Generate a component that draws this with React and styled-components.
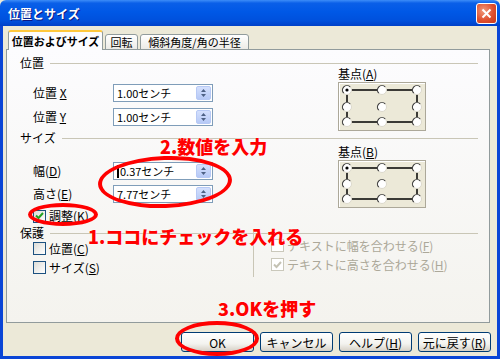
import React from 'react'
import styled, { createGlobalStyle } from 'styled-components'

const GlobalStyle = createGlobalStyle`
  html, body { margin:0; padding:0; background:#ECE9D8; }
  body {
    font-family:"Noto Sans CJK JP", "Liberation Sans", sans-serif;
    font-size:12px;
    color:#000;
  }
`

const Window = styled.div`
  position:relative;
  width:500px;
  height:359px;
  display:flex;
  flex-direction:column;
  overflow:hidden;
`

const TitleBar = styled.div`
  height:26px;
  flex:none;
  display:flex;
  align-items:center;
  justify-content:space-between;
  padding:0 3px 0 8px;
  background:linear-gradient(#3D8DF8 0%, #0A5FE8 12%, #0058E6 45%, #0050DC 80%, #0040C8 100%);
  border-radius:6px 6px 0 0;
`

const Title = styled.span`
  color:#fff;
  font-weight:700;
  font-size:12px;
  text-shadow:1px 1px 0 #0A1883;
`

const CloseBtn = styled.div`
  width:21px;
  height:21px;
  box-sizing:border-box;
  border:1px solid #fff;
  border-radius:3px;
  background:radial-gradient(circle at 35% 35%, #F09A7C 0%, #E0502F 55%, #C8381A 100%);
  display:flex;
  align-items:center;
  justify-content:center;
`

const Body = styled.div`
  flex:1;
  display:flex;
  flex-direction:column;
  background:#ECE9D8;
  border:3px solid #0A45D6;
  border-top:none;
  padding:5px 7px 0 3px;
`

const Tabs = styled.div`
  display:flex;
  align-items:flex-end;
  gap:2px;
  height:19px;
  margin-left:2px;
  margin-bottom:-1px;
  position:relative;
  z-index:1;
`

const Tab = styled.div`
  box-sizing:border-box;
  width:${p => p.$w}px;
  height:${p => (p.$active ? '20px' : '16px')};
  display:flex;
  align-items:center;
  justify-content:center;
  border:1px solid #919B9C;
  border-bottom:${p => (p.$active ? 'none' : '1px solid #919B9C')};
  border-top:${p => (p.$active ? '2px solid #FFC83C' : '1px solid #919B9C')};
  border-radius:3px 3px 0 0;
  background:${p => (p.$active ? '#FCFCFE' : 'linear-gradient(#FFFFFF, #ECEBE6)')};
  font-weight:${p => (p.$active ? 700 : 400)};
  font-size:11px;
  white-space:nowrap;
`

const Panel = styled.div`
  height:274px;
  box-sizing:border-box;
  border:1px solid #919B9C;
  background:linear-gradient(#FCFCFE, #F4F3EE);
  padding:8px 11px 0 13px;
`

const SectionHead = styled.div`
  display:flex;
  align-items:center;
  gap:6px;
  height:10px;
  line-height:10px;
  margin-top:${p => p.$gap || 0}px;
  &::after {
    content:'';
    flex:1;
    border-top:1px solid #C9C6B6;
  }
`

const SplitBody = styled.div`
  display:grid;
  grid-template-columns:318px 1fr;
`

const FieldCol = styled.div`
  display:flex;
  flex-direction:column;
  padding-top:${p => p.$top}px;
  gap:${p => p.$gap}px;
`

const BasisCol = styled.div`
  display:flex;
  flex-direction:column;
  align-items:flex-start;
  gap:2px;
  line-height:12px;
  padding-top:${p => p.$top || 0}px;
`

const Row = styled.div`
  display:flex;
  align-items:center;
  padding-left:13px;
  height:18px;
`

const Label = styled.span`
  width:80px;
  flex:none;
  line-height:12px;
`

const U = styled.span`
  text-decoration:underline;
`

const Field = styled.div`
  width:100px;
  height:18px;
  box-sizing:border-box;
  border:1px solid #7F9DB9;
  background:#fff;
  display:flex;
  align-items:center;
  padding:0 1px 0 3px;
  font-size:11px;
`

const FieldText = styled.span`
  flex:1;
  display:flex;
  align-items:center;
  line-height:14px;
`

const Caret = styled.span`
  width:2px;
  height:13px;
  background:#000;
  margin-right:1px;
`

const Spin = styled.div`
  width:15px;
  height:14px;
  box-sizing:border-box;
  border:1px solid #B7C9F5;
  border-radius:2px;
  background:linear-gradient(#D4E0FD, #B6C9F6);
  display:flex;
  align-items:center;
  justify-content:center;
`

const BasisBox = styled.div`
  width:88px;
  height:${p => p.$h}px;
  box-sizing:border-box;
  border:1px solid #ACA899;
  box-shadow:inset 1px 1px 0 #fff;
  background:#ECE9D8;
  display:flex;
`

const CheckRow = styled.div`
  display:flex;
  align-items:center;
  gap:3px;
  height:${p => p.$h || 14}px;
  padding-left:${p => (p.$indent === undefined ? 13 : p.$indent)}px;
  margin-top:${p => p.$top || 0}px;
  color:${p => (p.$disabled ? '#ACA899' : '#000')};
  line-height:12px;
  white-space:nowrap;
`

const Box = styled.span`
  width:13px;
  height:13px;
  flex:none;
  box-sizing:border-box;
  border:1px solid ${p => (p.$disabled ? '#CAC8BB' : '#1C5180')};
  background:${p => (p.$disabled ? '#fff' : 'linear-gradient(135deg, #DCDCD7, #FFFFFF)')};
  display:flex;
  align-items:center;
  justify-content:center;
`

const ProtectBody = styled.div`
  display:grid;
  grid-template-columns:233px 1fr;
`

const ProtectCol = styled.div`
  display:flex;
  flex-direction:column;
  padding-top:1px;
`

const FitCol = styled.div`
  display:flex;
  flex-direction:column;
  border-left:1px solid #C9C6B6;
  margin-top:-6px;
  padding:4px 0 0 17px;
`

const ButtonRow = styled.div`
  display:flex;
  justify-content:flex-end;
  gap:6px;
  margin-top:9px;
  margin-right:-1px;
`

const Button = styled.div`
  width:73px;
  height:20px;
  box-sizing:border-box;
  border:1px solid #003C74;
  border-radius:3px;
  background:linear-gradient(#FFFFFF, #F3F3EF 60%, #D6D0C5);
  display:flex;
  align-items:center;
  justify-content:center;
  font-size:12px;
`

const Ring = styled.div`
  position:absolute;
  left:${p => p.$x}px;
  top:${p => p.$y}px;
  width:${p => p.$w}px;
  height:${p => p.$h}px;
  box-sizing:border-box;
  border:4px solid #FF0000;
  border-radius:50%;
  transform:rotate(${p => p.$r || 0}deg);
  z-index:5;
`

const Note = styled.div`
  position:absolute;
  left:${p => p.$x}px;
  top:${p => p.$y}px;
  color:#FF0000;
  font-weight:900;
  font-size:18px;
  line-height:20px;
  white-space:nowrap;
  text-shadow:0 0 2px #fff;
  z-index:6;
`

const Check = ({ color }) => (
  <svg width="9" height="8" viewBox="0 0 9 8">
    <path d="M1 3.5 L3.5 6 L8 1" stroke={color} strokeWidth="2" fill="none" />
  </svg>
)

const SpinArrows = () => (
  <svg width="7" height="10" viewBox="0 0 7 10">
    <path d="M3.5 1 L6 4 L1 4 Z M1 6 L6 6 L3.5 9 Z" fill="#4D6185" />
  </svg>
)

const Radio = ({ x, y, on }) => (
  <g transform={`translate(${x} ${y})`}>
    <circle r="4.5" fill="#fff" stroke="#DCD9CC" />
    <path d="M-3.2 3.2 A4.5 4.5 0 0 1 3.2 -3.2" stroke="#3F3F3F" strokeWidth="1.2" fill="none" />
    {on && <circle r="1.6" fill="#000" />}
  </g>
)

const BasisPoints = ({ h }) => {
  const xs = [8, 43, 78]
  const ys = h > 48 ? [7, 24, 39] : [7, 23, 38]
  return (
    <svg width="86" height={h - 2} viewBox={`0 0 86 ${h - 2}`}>
      <rect x={xs[0]} y={ys[0]} width={xs[2] - xs[0]} height={ys[2] - ys[0]} fill="none" stroke="#000" strokeWidth="1.5" />
      {ys.map((y, r) => xs.map((x, c) => <Radio key={`${r}${c}`} x={x} y={y} on={r === 0 && c === 0} />))}
    </svg>
  )
}

const NumField = ({ value, caret }) => (
  <Field>
    <FieldText>{caret && <Caret />}{value}</FieldText>
    <Spin><SpinArrows /></Spin>
  </Field>
)

export default function App() {
  return (
    <Window>
      <GlobalStyle />
      <TitleBar>
        <Title>位置とサイズ</Title>
        <CloseBtn>
          <svg width="11" height="11" viewBox="0 0 11 11">
            <path d="M1.5 1.5 L9.5 9.5 M9.5 1.5 L1.5 9.5" stroke="#fff" strokeWidth="2" />
          </svg>
        </CloseBtn>
      </TitleBar>
      <Body>
        <Tabs>
          <Tab $active $w={95}>位置およびサイズ</Tab>
          <Tab $w={33}>回転</Tab>
          <Tab $w={109}>傾斜角度/角の半径</Tab>
        </Tabs>
        <Panel>
          <SectionHead>位置</SectionHead>
          <SplitBody>
            <FieldCol $top={16} $gap={6}>
              <Row><Label>位置 <U>X</U></Label><NumField value="1.00センチ" /></Row>
              <Row><Label>位置 <U>Y</U></Label><NumField value="1.00センチ" /></Row>
            </FieldCol>
            <BasisCol>
              <span>基点(<U>A</U>)</span>
              <BasisBox $h={49}><BasisPoints h={49} /></BasisBox>
            </BasisCol>
          </SplitBody>

          <SectionHead $gap={2}>サイズ</SectionHead>
          <SplitBody>
            <FieldCol $top={19} $gap={5}>
              <Row><Label>幅(<U>D</U>)</Label><NumField value="0.37センチ" caret /></Row>
              <Row><Label>高さ(<U>E</U>)</Label><NumField value="7.77センチ" /></Row>
              <CheckRow $top={1}>
                <Box><Check color="#21A121" /></Box>
                <span>調整(<U>K</U>)</span>
              </CheckRow>
            </FieldCol>
            <BasisCol $top={3}>
              <span>基点(<U>B</U>)</span>
              <BasisBox $h={48}><BasisPoints h={48} /></BasisBox>
            </BasisCol>
          </SplitBody>

          <SectionHead $gap={5}>保護</SectionHead>
          <ProtectBody>
            <ProtectCol>
              <CheckRow $h={19}><Box /><span>位置(<U>C</U>)</span></CheckRow>
              <CheckRow $h={19}><Box /><span>サイズ(<U>S</U>)</span></CheckRow>
            </ProtectCol>
            <FitCol>
              <CheckRow $h={19} $indent={0} $disabled><Box $disabled /><span>テキストに幅を合わせる(<U>F</U>)</span></CheckRow>
              <CheckRow $h={19} $indent={0} $disabled><Box $disabled><Check color="#C4C2B3" /></Box><span>テキストに高さを合わせる(<U>H</U>)</span></CheckRow>
            </FitCol>
          </ProtectBody>
        </Panel>
        <ButtonRow>
          <Button>OK</Button>
          <Button>キャンセル</Button>
          <Button>ヘルプ(<U>H</U>)</Button>
          <Button>元に戻す(<U>R</U>)</Button>
        </ButtonRow>
      </Body>

      <Ring $x={98} $y={156} $w={134} $h={52} $r={-2} />
      <Ring $x={28} $y={203} $w={70} $h={23} />
      <Ring $x={175} $y={321} $w={84} $h={35} />
      <Note $x={160} $y={136}>2.数値を入力</Note>
      <Note $x={88} $y={226}>1.ココにチェックを入れる</Note>
      <Note $x={218} $y={298}>3.OKを押す</Note>
    </Window>
  )
}
